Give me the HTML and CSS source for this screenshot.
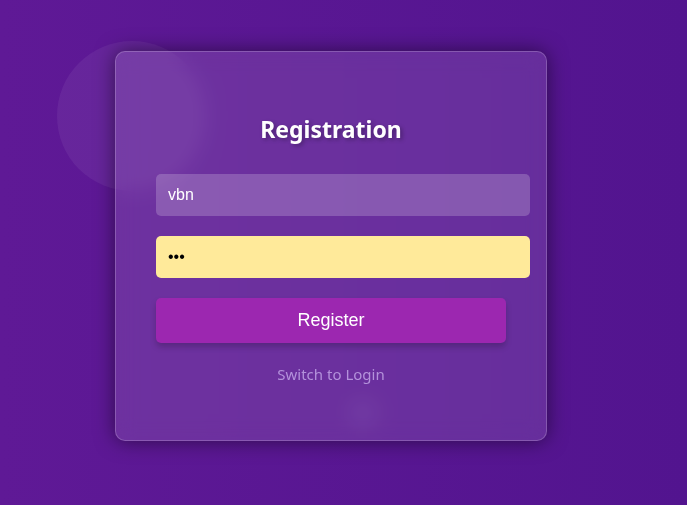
FILE: index.html
```html
<!DOCTYPE html>
<html lang="en">
<head>
<meta charset="utf-8">
<meta name="viewport" content="width=device-width, initial-scale=1">
<title>Registration</title>
<link rel="stylesheet" href="styles.css">
</head>
<body>
<div class="bubble bubble-large"></div>
<div class="bubble bubble-small"></div>
<main class="card">
  <h2 class="title">Registration</h2>
  <form class="form">
    <input class="field" type="text" aria-label="Username" value="vbn">
    <input class="field field-filled" type="password" aria-label="Password" value="abc">
    <button class="submit" type="button">Register</button>
  </form>
  <a class="switch" href="#">Switch to Login</a>
</main>
</body>
</html>
```

FILE: styles.css
```css
* {
  box-sizing: border-box;
}

body {
  position: relative;
  display: flex;
  align-items: center;
  justify-content: center;
  min-height: 100vh;
  margin: 0;
  padding: 0 25px 13px 0;
  overflow: hidden;
  font-family: "Segoe UI", "Noto Sans", sans-serif;
  background: linear-gradient(90deg, #5f1996, #52148f);
}

/* Decorative bubbles floating behind the card */
.bubble {
  position: absolute;
  border-radius: 50%;
  background: rgba(255, 255, 255, 0.06);
}

.bubble-large {
  top: 41px;
  left: 57px;
  width: 150px;
  height: 150px;
}

.bubble-small {
  top: 398px;
  left: 348px;
  width: 30px;
  height: 30px;
}

.card {
  position: relative;
  display: flex;
  flex-direction: column;
  width: 100%;
  max-width: 432px;
  padding: 60px 40px 55px;
  border: 1px solid rgba(255, 255, 255, 0.2);
  border-radius: 10px;
  background: rgba(255, 255, 255, 0.11);
  box-shadow: 0 0 20px rgba(0, 0, 0, 0.5);
  backdrop-filter: blur(10px);
  text-align: center;
}

.title {
  margin: 0 0 28px;
  color: #fff;
  font-size: 23px;
  line-height: 34px;
  text-shadow: 2px 2px 4px rgba(0, 0, 0, 0.3);
}

.form {
  display: flex;
  flex-direction: column;
  gap: 20px;
}

.field {
  box-sizing: content-box;
  width: 100%;
  height: 18px;
  padding: 12px;
  border: 0;
  border-radius: 5px;
  outline: 0;
  background: rgba(255, 255, 255, 0.2);
  color: #fff;
  font: 16px "Liberation Sans", Arial, sans-serif;
}

.field-filled {
  background: #ffea9a;
  color: #000;
}

.submit {
  height: 45px;
  padding: 0;
  border: 0;
  border-radius: 5px;
  background: #9c27b0;
  box-shadow: 0 4px 6px rgba(0, 0, 0, 0.2);
  color: #fff;
  font: 18px "Liberation Sans", Arial, sans-serif;
}

.switch {
  margin-top: 20px;
  color: #b492db;
  font-size: 15px;
  line-height: 22px;
  text-decoration: none;
}
```
